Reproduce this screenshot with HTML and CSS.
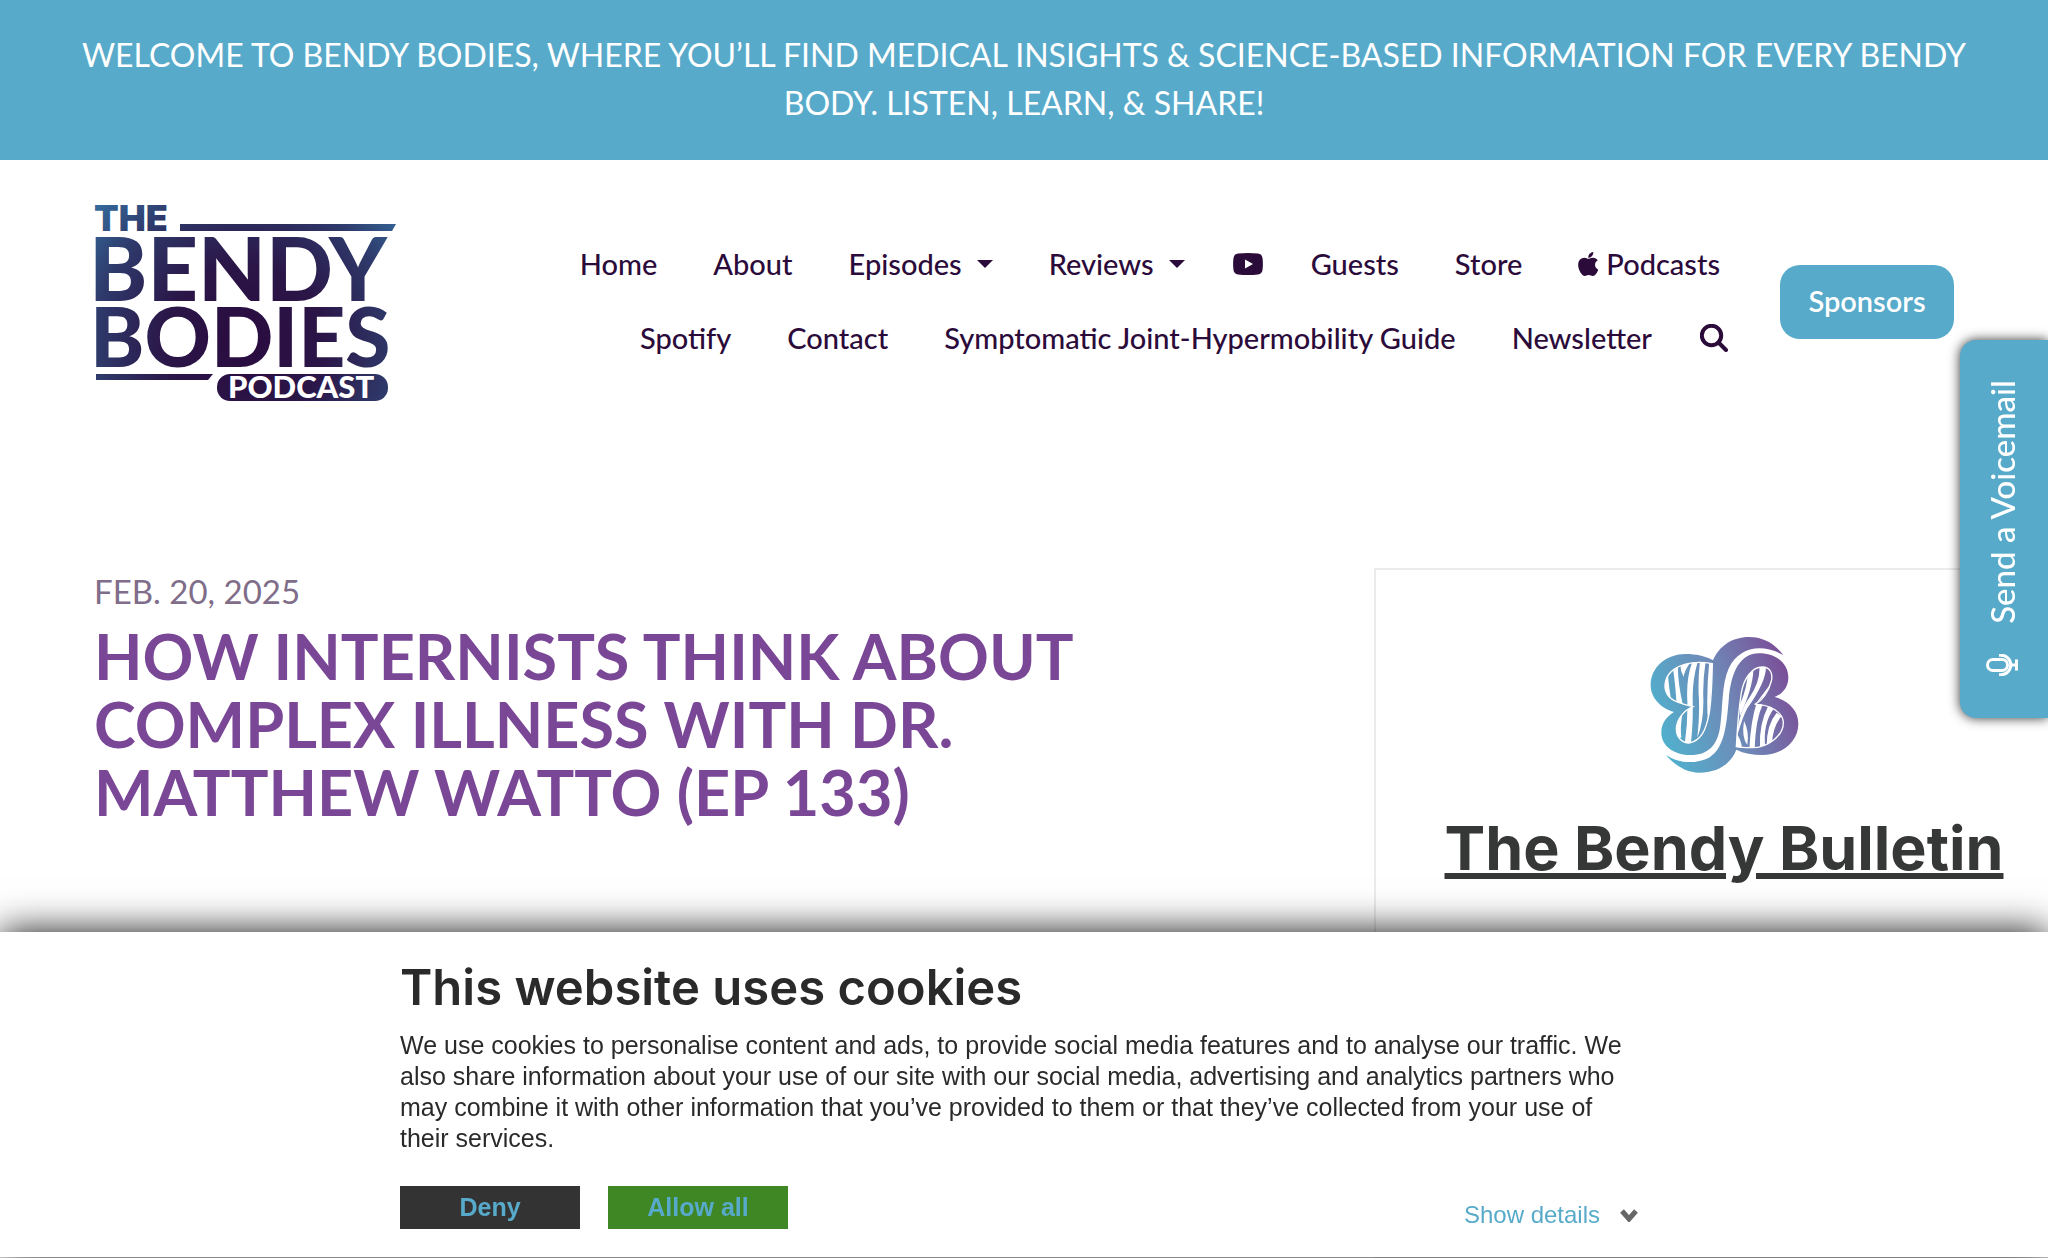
FILE: index.html
```html
<!DOCTYPE html>
<html lang="en">
<head>
<meta charset="utf-8">
<meta name="viewport" content="width=device-width, initial-scale=1">
<title>How Internists Think About Complex Illness with Dr. Matthew Watto (Ep 133)</title>
<link rel="stylesheet" href="styles.css">
</head>
<body>
<div class="announcement">WELCOME TO BENDY BODIES, WHERE YOU’LL FIND MEDICAL INSIGHTS &amp; SCIENCE-BASED INFORMATION FOR EVERY BENDY BODY. LISTEN, LEARN, &amp; SHARE!</div>

<header class="site-header">
  <a class="brand" href="#" aria-label="The Bendy Bodies Podcast">
    <svg class="brand-logo" viewBox="-1 0 302 200">
      <defs>
        <radialGradient id="ink" gradientUnits="userSpaceOnUse" cx="150" cy="140" r="200">
          <stop offset="0" stop-color="#2a0b3e"/>
          <stop offset=".4" stop-color="#2b1648"/>
          <stop offset=".75" stop-color="#2e3a6b"/>
          <stop offset="1" stop-color="#35689a"/>
        </radialGradient>
      </defs>
      <g fill="url(#ink)">
        <text class="logo-word logo-word-heavy" x="-1" y="29" font-size="36">THE</text>
        <path d="M85 22H301L297 29H85Z"/>
        <text class="logo-word" x="-6" y="99" font-size="88">BENDY</text>
        <text class="logo-word" x="-5" y="165" font-size="82">BODIES</text>
        <path d="M1 172H118L113 178H1Z"/>
        <rect x="122" y="172" width="171" height="27" rx="13"/>
      </g>
      <text class="logo-word" x="133" y="196" font-size="31" fill="#fff">PODCAST</text>
    </svg>
  </a>
  <nav class="main-nav" aria-label="Main">
    <ul class="nav-list">
      <li><a class="nav-link" href="#">Home</a></li>
      <li><a class="nav-link" href="#">About</a></li>
      <li><a class="nav-link" href="#">Episodes <span class="caret"></span></a></li>
      <li><a class="nav-link" href="#">Reviews <span class="caret"></span></a></li>
      <li><a class="nav-link nav-link-icon" href="#" aria-label="YouTube">
        <svg class="icon-youtube" viewBox="0 0 30 22"><path fill-rule="evenodd" d="M5 .6Q15-.5 25 .6Q29 1 29.500 5Q30.300 11 29.500 17Q29 21 25 21.400Q15 22.500 5 21.400Q1 21 .5 17Q-.3 11 .5 5Q1 1 5 .6ZM12 6.500V15.500L20 11Z"/></svg>
      </a></li>
      <li><a class="nav-link" href="#">Guests</a></li>
      <li><a class="nav-link" href="#">Store</a></li>
      <li><a class="nav-link" href="#"><svg class="icon-apple" viewBox="4 32 367 448"><path d="M318.700 268.700c-.2-36.700 16.400-64.400 50-84.800-18.800-26.900-47.200-41.700-84.700-44.600-35.500-2.800-74.300 20.700-88.500 20.700-15 0-49.400-19.700-76.400-19.700C63.300 141.200 4 184.800 4 273.500q0 39.300 14.400 81.200c12.800 36.700 59 126.700 107.200 125.200 25.200-.6 43-17.900 75.800-17.900 31.800 0 48.300 17.900 76.400 17.900 48.600-.7 90.400-82.500 102.600-119.300-65.200-30.700-61.700-90-61.700-91.900zm-56.600-164.200c27.300-32.400 24.800-61.900 24-72.500-24.100 1.400-52 16.400-67.900 34.900-17.500 19.800-27.800 44.300-25.600 71.900 26.100 2 49.900-11.400 69.500-34.300z"/></svg>Podcasts</a></li>
      <li><a class="nav-link" href="#">Spotify</a></li>
      <li><a class="nav-link" href="#">Contact</a></li>
      <li><a class="nav-link" href="#">Symptomatic Joint-Hypermobility Guide</a></li>
      <li><a class="nav-link" href="#">Newsletter</a></li>
      <li><a class="nav-link nav-link-icon" href="#" aria-label="Search">
        <svg class="icon-search" viewBox="0 0 28 28"><circle cx="11.500" cy="11.500" r="9.700"/><path d="M18.500 18.500L26 26"/></svg>
      </a></li>
    </ul>
  </nav>
  <a class="sponsors" href="#">Sponsors</a>
</header>

<main class="content">
  <article class="episode">
    <p class="episode-date">FEB. 20, 2025</p>
    <h1 class="episode-title">HOW INTERNISTS THINK ABOUT COMPLEX ILLNESS WITH DR. MATTHEW WATTO (EP 133)</h1>
  </article>
  <aside class="sidebar">
    <div class="newsletter">
      <svg class="butterfly" viewBox="55 45 453 414" aria-hidden="true">
        <defs>
          <linearGradient id="wing" gradientUnits="userSpaceOnUse" x1="90" y1="350" x2="490" y2="190">
            <stop offset="0" stop-color="#50b0cd"/>
            <stop offset=".5" stop-color="#6e8bb8"/>
            <stop offset="1" stop-color="#7b4f98"/>
          </linearGradient>
          <clipPath id="left-cell"><path d="M245 128C200 120 160 125 130 145C105 162 95 195 110 220C122 240 150 248 187 257C160 268 137 295 137 325C137 350 155 366 175 366C210 360 225 330 235 280C242 240 244 180 245 128Z"/></clipPath>
          <clipPath id="right-cell"><path d="M317 377C320 320 325 260 332 215C340 170 365 138 395 138C420 138 427 160 422 180C415 210 395 240 372 250C420 250 457 275 458 305C458 345 410 380 365 380C345 380 330 380 317 377Z"/></clipPath>
        </defs>
        <g fill="url(#wing)">
          <path d="M458 102C430 65 395 48 355 48C305 48 265 75 247 118C225 105 195 99 165 99C105 99 60 140 60 192C60 230 90 262 130 273C105 288 92 310 92 335C92 375 130 402 180 402C235 402 260 370 268 320C277 260 272 190 295 140C325 80 390 65 458 102Z"/>
          <path d="M106 402C140 425 190 432 235 410C285 380 288 300 294 240C300 150 330 97 385 97C440 97 473 130 473 170C473 195 458 218 432 228C475 240 503 270 503 308C503 365 450 402 395 402C365 402 340 397 317 386C300 430 260 455 205 455C165 455 130 430 106 402Z"/>
        </g>
        <g clip-path="url(#left-cell)" fill="#fff">
          <path d="M100 170L112 158Q114 200 124 250H106Z"/>
          <path d="M127 140L142 132Q140 180 158 258L138 250Q134 190 127 140Z"/>
          <path d="M150 120H182Q160 150 159 168Q146 145 150 120Z"/>
          <path d="M186 120H202Q186 170 186 230Q188 310 180 370H162Q172 300 170 240Q166 170 186 120Z"/>
          <path d="M208 120H225Q216 180 218 230Q220 300 200 350Q208 280 204 220Q202 170 208 120Z"/>
          <path d="M236 120H250L232 310Q226 220 236 120Z"/>
          <path d="M136 300L155 280Q148 320 152 350H136Z"/>
        </g>
        <g clip-path="url(#right-cell)" fill="#fff">
          <path d="M328 250Q350 200 352 150H368Q366 200 328 285Z"/>
          <path d="M386 135H406Q408 180 350 262Q335 290 318 350Q325 270 356 230Q390 180 386 135Z"/>
          <path d="M378 245L398 248Q375 290 372 385H356Q360 300 378 245Z"/>
          <path d="M414 252L430 262Q395 310 404 380H388Q384 310 414 252Z"/>
          <path d="M438 275L452 286Q425 320 424 370L408 375Q408 310 438 275Z"/>
          <path d="M340 300Q356 330 350 372Q332 350 340 300Z"/>
          <path d="M316 335Q334 360 334 385H314Z"/>
          <path d="M424 185L400 225L375 248L415 195Z"/>
        </g>
        <g fill="none" stroke="#fff" stroke-width="4">
          <path d="M245 128C200 120 160 125 130 145C105 162 95 195 110 220C122 240 150 248 187 257C160 268 137 295 137 325C137 350 155 366 175 366C210 360 225 330 235 280C242 240 244 180 245 128Z"/>
          <path d="M317 377C320 320 325 260 332 215C340 170 365 138 395 138C420 138 427 160 422 180C415 210 395 240 372 250C420 250 457 275 458 305C458 345 410 380 365 380C345 380 330 380 317 377Z"/>
        </g>
      </svg>
      <h2 class="newsletter-title">The Bendy Bulletin</h2>
    </div>
  </aside>
</main>

<button class="voicemail" type="button">
  <span class="voicemail-text">Send a Voicemail</span>
  <svg class="icon-mic" viewBox="0 0 32 22"><rect x="1.500" y="5.500" width="20" height="11" rx="5.500"/><path d="M13 1.200H15A9.800 9.800 0 0 1 15 20.800H13M25 11H30M30.500 5.500V16.500"/></svg>
</button>

<section class="cookies" aria-labelledby="cookies-title">
  <div class="cookies-inner">
    <h2 class="cookies-title" id="cookies-title">This website uses cookies</h2>
    <p class="cookies-text">We use cookies to personalise content and ads, to provide social media features and to analyse our traffic. We also share information about your use of our site with our social media, advertising and analytics partners who may combine it with other information that you’ve provided to them or that they’ve collected from your use of their services.</p>
    <div class="cookies-actions">
      <button class="cookie-button" type="button">Deny</button>
      <button class="cookie-button cookie-button-allow" type="button">Allow all</button>
      <a class="cookie-details" href="#">Show details
        <svg class="icon-chevron" viewBox="0 0 18 14"><path d="M2 3L9 11L16 3"/></svg>
      </a>
    </div>
  </div>
</section>
</body>
</html>
```
FILE: styles.css
```css
* {
  box-sizing: border-box;
}

body {
  margin: 0;
  overflow-x: hidden;
  background: #fff;
  color: #2b0b3a;
  font-family: Lato, sans-serif;
}

a {
  color: inherit;
  text-decoration: none;
}

button {
  border: 0;
  margin: 0;
  cursor: pointer;
}

.announcement {
  padding: 31px 64px 33px;
  background: #58aaca;
  color: #fff;
  font-size: 32px;
  line-height: 48px;
  text-align: center;
}

.site-header {
  display: flex;
  align-items: center;
  padding: 42px 94px;
}

.brand {
  flex: none;
}

.brand-logo {
  display: block;
  width: 302px;
  height: 200px;
  overflow: visible;
}

.logo-word {
  font-family: Lato, sans-serif;
  font-weight: 900;
}

.logo-word-heavy {
  font-family: Inter, sans-serif;
}

.main-nav {
  flex: 0 1 1260px;
  margin-left: auto;
}

.nav-list {
  display: flex;
  flex-wrap: wrap;
  justify-content: flex-end;
  margin: 0;
  padding: 0;
  list-style: none;
}

.nav-link {
  display: flex;
  align-items: center;
  height: 74px;
  padding: 0 28px 2px;
  font-size: 29px;
  font-weight: 500;
  line-height: 42px;
}

.nav-link-icon {
  padding: 0 20px 2px;
}

.caret {
  margin-left: 15px;
  border: 8px solid transparent;
  border-top-color: currentColor;
  border-bottom: 0;
}

.icon-youtube {
  width: 30px;
  height: 22px;
  fill: currentColor;
}

.icon-apple {
  width: 20px;
  height: 24px;
  margin-right: 8px;
  fill: currentColor;
}

.icon-search {
  width: 28px;
  height: 28px;
  fill: none;
  stroke: currentColor;
  stroke-width: 4;
  stroke-linecap: round;
}

.sponsors {
  flex: none;
  min-width: 174px;
  margin-left: 32px;
  padding: 15px 0 17px;
  border-radius: 20px;
  background: #58aaca;
  color: #fff;
  font-size: 29px;
  font-weight: 600;
  line-height: 42px;
  text-align: center;
}

.content {
  display: grid;
  grid-template-columns: minmax(0, 1fr) 580px;
  padding: 124px 94px 0;
}

.episode {
  max-width: 1060px;
}

.episode-date {
  margin: 0 0 8px;
  color: #806d89;
  font-size: 33px;
  line-height: 46px;
}

.episode-title {
  margin: 0;
  color: #7a4797;
  font-size: 63px;
  font-weight: 700;
  line-height: 68px;
}

.newsletter {
  display: flex;
  flex-direction: column;
  align-items: center;
  width: 700px;
  min-height: 690px;
  padding: 66px 0;
  border: 2px solid #ebebeb;
}

.butterfly {
  width: 151px;
  height: 138px;
}

.newsletter-title {
  margin: 36px 0 0;
  color: #363737;
  font-family: Inter, sans-serif;
  font-size: 61px;
  font-weight: 700;
  line-height: 76px;
  text-decoration: underline;
  text-decoration-thickness: 6px;
}

.voicemail {
  position: fixed;
  top: 340px;
  right: 0;
  display: flex;
  flex-direction: column;
  align-items: center;
  gap: 30px;
  width: 88px;
  padding: 40px 4px 42px 0;
  border-radius: 16px 0 0 16px;
  background: #58aaca;
  box-shadow: 0 0 12px rgba(0, 0, 0, .8);
  color: #fff;
  font-family: Lato, sans-serif;
  font-size: 33px;
  font-weight: 500;
  line-height: 40px;
}

.voicemail-text {
  writing-mode: vertical-rl;
  transform: rotate(180deg);
}

.icon-mic {
  width: 32px;
  height: 22px;
  fill: none;
  stroke: currentColor;
  stroke-width: 3;
}

.cookies {
  position: fixed;
  right: 0;
  bottom: 1px;
  left: 0;
  padding: 26px 0 28px;
  background: #fff;
  box-shadow: 0 0 36px #121212;
  color: #2a2a2a;
  font-family: "Liberation Sans", sans-serif;
}

.cookies-inner {
  max-width: 1248px;
  margin: 0 auto;
  padding-right: 10px;
}

.cookies-title {
  margin: 0 0 12px;
  font-family: Inter, sans-serif;
  font-size: 49px;
  font-weight: 600;
  line-height: 60px;
}

.cookies-text {
  margin: 0 0 32px;
  font-size: 25px;
  line-height: 31px;
}

.cookies-actions {
  display: flex;
  gap: 28px;
}

.cookie-button {
  width: 180px;
  height: 43px;
  padding: 0;
  background: #333;
  color: #58aaca;
  font: 700 25px/43px "Liberation Sans", sans-serif;
}

.cookie-button-allow {
  background: #3f8624;
}

.cookie-details {
  display: flex;
  align-items: center;
  align-self: flex-end;
  gap: 20px;
  margin-left: auto;
  color: #58aaca;
  font-size: 24px;
  line-height: 28px;
}

.icon-chevron {
  width: 18px;
  height: 14px;
  fill: none;
  stroke: #666;
  stroke-width: 5;
}
```
